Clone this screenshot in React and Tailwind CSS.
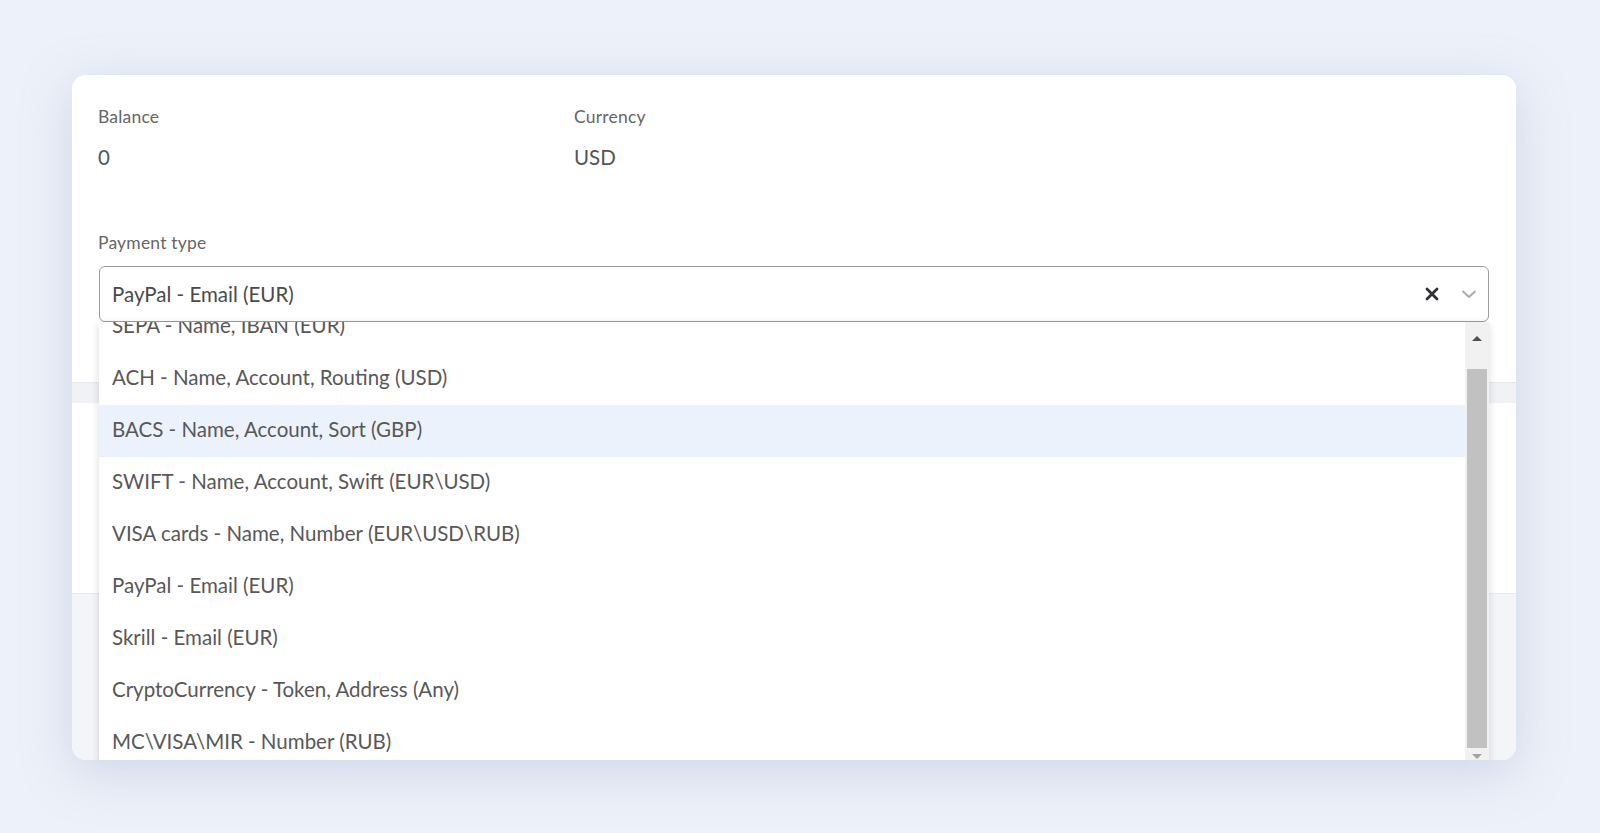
import { useState } from "react"

const paymentTypes = [
  "SEPA - Name, IBAN (EUR)",
  "ACH - Name, Account, Routing (USD)",
  "BACS - Name, Account, Sort (GBP)",
  "SWIFT - Name, Account, Swift (EUR\\USD)",
  "VISA cards - Name, Number (EUR\\USD\\RUB)",
  "PayPal - Email (EUR)",
  "Skrill - Email (EUR)",
  "CryptoCurrency - Token, Address (Any)",
  "MC\\VISA\\MIR - Number (RUB)",
]

function InfoField({ label, value, className = "" }) {
  return (
    <div className={className}>
      <div className="text-[17.5px] leading-5 tracking-[0.2px] text-[#666]">{label}</div>
      <div className="mt-[18px] text-[20.5px] leading-6 text-[#555]">{value}</div>
    </div>
  )
}

function Scrollbar() {
  return (
    <div className="flex w-[24px] flex-col items-center bg-[#f1f1f1]">
      <div className="flex h-[32px] w-full items-center justify-center">
        <div className="h-0 w-0 border-x-[5px] border-b-[5px] border-x-transparent border-b-[#505050]" />
      </div>
      <div className="h-[15px]" />
      <div className="h-[379px] w-[20px] bg-[#c1c1c1]" />
      <div className="flex h-[17px] w-full items-center justify-center">
        <div className="h-0 w-0 border-x-[5px] border-t-[5px] border-x-transparent border-t-[#a3a3a3]" />
      </div>
    </div>
  )
}

function PaymentSelect({ value, hovered }) {
  return (
    <div className="relative">
      <div className="flex h-[56px] items-center rounded-[6px] border border-[#9d9d9d] bg-white pl-[12px] pr-[10px]">
        <span className="flex-1 text-[20.5px] text-[#4a4a4a]">{value}</span>
        <svg width="16" height="16" viewBox="0 0 16 16" className="mr-[20px]">
          <path d="M3 3 L13 13 M13 3 L3 13" stroke="#2f2f36" strokeWidth="2.8" strokeLinecap="round" />
        </svg>
        <svg width="18" height="18" viewBox="0 0 18 18">
          <path d="M3 6.5 L9 12 L15 6.5" fill="none" stroke="#a8a8a8" strokeWidth="1.8" strokeLinecap="round" strokeLinejoin="round" />
        </svg>
      </div>

      {/* open options list, scrolled down by a bit */}
      <div className="absolute left-0 right-0 top-full z-10 flex h-[443px] overflow-hidden bg-white shadow-[0_2px_8px_rgba(0,0,0,0.14)]">
        <div className="flex-1 overflow-hidden">
          <div className="-mt-[21px]">
            {paymentTypes.map((item) => (
              <div
                key={item}
                className={
                  "flex h-[52px] items-center pb-[4px] pl-[13px] text-[20.5px] text-[#585858] " +
                  (item === hovered ? "bg-[#ebf2fc]" : "")
                }
              >
                {item}
              </div>
            ))}
          </div>
        </div>
        <Scrollbar />
      </div>
    </div>
  )
}

export default function App() {
  const [selected] = useState("PayPal - Email (EUR)")

  return (
    <div
      className="min-h-screen bg-[#edf1f9] pl-[72px] pt-[75px]"
      style={{ fontFamily: "Lato, 'Open Sans', sans-serif" }}
    >
      <div className="flex h-[685px] w-[1444px] flex-col overflow-hidden rounded-[14px] bg-white shadow-[0_12px_50px_rgba(150,165,200,0.35)]">
        <div className="h-[307px] shrink-0 px-[26px] pt-[32px]">
          <div className="flex">
            <InfoField label="Balance" value="0" className="w-[476px]" />
            <InfoField label="Currency" value="USD" />
          </div>

          <div className="mt-[64px] text-[17.5px] leading-5 tracking-[0.2px] text-[#666]">Payment type</div>
          <div className="relative z-10 mt-[13px] px-px">
            <PaymentSelect value={selected} hovered="BACS - Name, Account, Sort (GBP)" />
          </div>
        </div>
        <div className="h-[21px] shrink-0 border-t border-[#e6e8ee] bg-[#f1f2f6]" />
        <div className="h-[190px] shrink-0 bg-white" />
        <div className="flex-1 border-t border-[#e6e8ee] bg-[#f4f5f9]" />
      </div>
    </div>
  )
}
